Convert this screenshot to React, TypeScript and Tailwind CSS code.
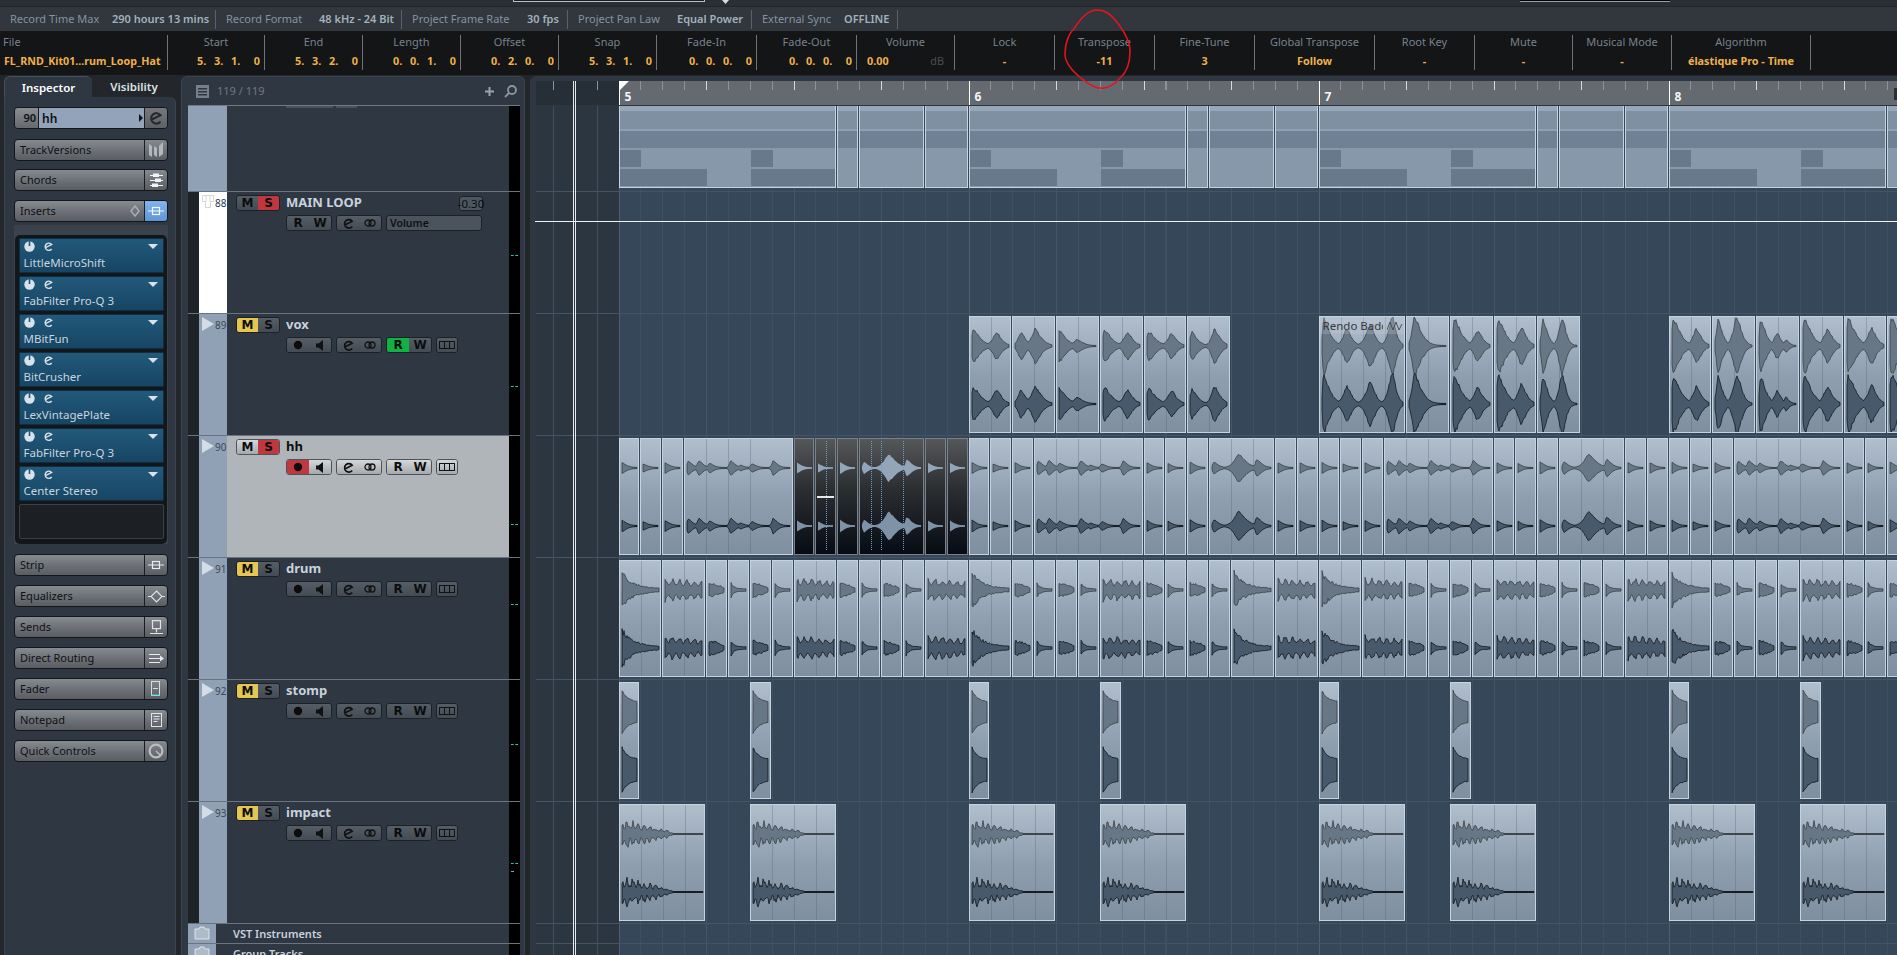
import React from "react";

const U = 21.875;
const ORIGIN = 82.6;

function rng(seed: number) {
  let s = seed * 2654435761 + 12345;
  return () => {
    s = (s + 0x6d2b79f5) | 0;
    let t = Math.imul(s ^ (s >>> 15), 1 | s);
    t = (t + Math.imul(t ^ (t >>> 7), 61 | t)) ^ t;
    return ((t ^ (t >>> 14)) >>> 0) / 4294967296;
  };
}

type Lobe = [number, number, number, number];
type Env = (t: number, x: number, w: number) => number;

const lobes = (l: Lobe[]): Env => (t, x, w) => {
  let a = 0;
  for (const [p, amp, dec, rise] of l) {
    const d = x - p * w;
    const v = d >= 0 ? amp * Math.exp(-Math.pow(d / dec, 1.5)) : amp * Math.exp(-Math.pow(-d / rise, 1.5));
    a = Math.max(a, v);
  }
  return a;
};

const kick: Env = (t) => 18 * Math.exp(-t * 3.6) + 0.8;
const noisy: Env = (t, x) => (9.5 - 3 * t) * (0.8 + 0.3 * Math.sin(x * 0.85));
const medium: Env = (t) => 6.5 * (1 - 0.55 * t) * Math.min(1, (t + 0.08) * 6) * (1 - Math.pow(t, 5) * 0.7);
const decay: Env = (t) => 10 * Math.exp(-t * 5.5) + 0.6;
const stomp: Env = (t) => 9.5 + 16.5 * Math.exp(-t * 3.3);
const impact: Env = (t, x) => (t < 0.62 ? (11 * Math.pow(1 - t / 0.62, 0.7) + 0.5) * (0.75 + 0.3 * Math.sin(x * 1.1)) : 0);

function shape(w: number, env: Env, seed: number, cy: number, jag: number, scale: number) {
  const r = rng(seed);
  const up: string[] = [];
  const dn: string[] = [];
  for (let x = 2; x <= w - 1; x++) {
    const a = env(x / w, x, w) * scale;
    up.push(`${x},${(cy - a * (1 + jag * (r() - 0.5)) - 0.5).toFixed(1)}`);
    dn.unshift(`${x},${(cy + a * (1 + jag * (r() - 0.5)) + 0.5).toFixed(1)}`);
  }
  return up.concat(dn).join(" ");
}

function Wave({ w, h, env, seed, jag = 0.18, dark = false }: { w: number; h: number; env: Env; seed: number; jag?: number; dark?: boolean }) {
  const tops = dark
    ? [{ f: "#93a6b9", s: "none", l: "#7f90a2" }, { f: "#7f93a8", s: "none", l: "#7f90a2" }]
    : [{ f: "#677786", s: "#34383c", l: "#3a3c3f" }, { f: "#47596b", s: "#0a0d10", l: "#0c0e10" }];
  return (
    <svg width={w} height={h} className="block">
      {[29, 87].map((cy, i) => (
        <g key={i}>
          <line x1={2} x2={w - 1} y1={cy} y2={cy} stroke={tops[i].l} strokeWidth={1.6} />
          <polygon points={shape(w, env, seed + i * 97, cy, jag, i === 0 ? 1 : 1.05)} fill={tops[i].f} stroke={tops[i].s} strokeWidth={0.7} />
        </g>
      ))}
    </svg>
  );
}

const EVENT_BG = "bg-[repeating-linear-gradient(90deg,transparent_0,transparent_20.9px,rgba(72,92,112,.3)_20.9px,rgba(72,92,112,.3)_21.875px),linear-gradient(#b1becc,#8f9fb0_50%,#7f8fa0)]";

function Ev({ start, len, env, seed, jag, dark, children }: { start: number; len: number; env?: Env; seed: number; jag?: number; dark?: boolean; children?: React.ReactNode }) {
  const w = len * U - 1;
  return (
    <div
      className={`absolute top-[2px] h-[117px] border overflow-hidden ${dark ? "border-[#7c7f83] bg-[linear-gradient(#55575a,#2a2d30_45%,#070c14)]" : `border-[#c3d3e2] ${EVENT_BG}`}`}
      style={{ left: ORIGIN + start * U, width: w }}
    >
      {env && <Wave w={Math.floor(w - 2)} h={115} env={env} seed={seed} jag={jag} dark={dark} />}
      {children}
    </div>
  );
}

function MidiPart({ start, end }: { start: number; end: number }) {
  const w = (end - start) * U - 1;
  const hits = [0, 6, 16, 22, 32, 38, 48, 54];
  return (
    <div className="absolute top-0 h-[82px] border-b border-x border-[#c3d3e2] bg-[#8698aa] overflow-hidden" style={{ left: ORIGIN + start * U, width: w }}>
      <div className="h-[5px] bg-[#97a8b8]" />
      <div className="h-[18px] bg-[#7e90a2]" />
      <div className="h-[2px] bg-[#8fa0b1]" />
      <div className="h-[17px] bg-[#6f8194]" />
      {hits.map((u) => (
        <React.Fragment key={u}>
          <div className="absolute top-[44px] h-[17px] bg-[#67798b]" style={{ left: (u - start) * U, width: U }} />
          <div className="absolute top-[63px] h-[17px] bg-[#67798b]" style={{ left: (u - start) * U, width: 4 * U }} />
        </React.Fragment>
      ))}
    </div>
  );
}

const hhRaw: [number, number, Lobe[]][] = [
  [0, 1, [[0.04, 9, 3.5, 1]]],
  [1, 1, [[0.06, 6, 3.5, 1]]],
  [2, 1, [[0.06, 8, 3.5, 1]]],
  [3, 5, [[0.03, 10, 3, 1.2], [0.13, 11, 3, 1.5], [0.23, 7, 3, 1.2], [0.43, 11, 3, 1.2], [0.52, 4, 2.5, 1], [0.63, 6, 3, 1.2], [0.83, 11, 3, 1.2]]],
  [8, 1, [[0.06, 8, 3.5, 1]]],
  [9, 1, [[0.06, 7, 3, 1]]],
  [10, 1, [[0.08, 9, 3.5, 1]]],
  [11, 3, [[0.06, 9, 3, 1], [0.46, 21, 5, 4.5], [0.75, 13, 3.5, 1.2]]],
  [14, 1, [[0.06, 8, 3.5, 1]]],
  [15, 1, [[0.06, 8, 3.5, 1]]],
];
const hhPattern: [number, number, Lobe[]][] = hhRaw.map(([s, l, lb]) => [s, l, lb.map(([p, a, d, r]) => [p, a * 0.62, d * 1.8, r * 1.3] as Lobe)]);

const V = (a: number, b: number): Lobe[] => [[0.08, a, 9, 2], [0.66, b, 6.5, 5]];
const voxEvents: [number, number, Lobe[]][] = [
  [16, 2, V(15, 13)], [18, 2, [[0.2, 13, 6, 4], [0.55, 16, 8, 5]]], [20, 2, [[0.04, 15, 9, 2], [0.5, 6, 7, 4]]], [22, 2, V(15, 13)], [24, 2, V(14, 12)], [26, 2, [[0.1, 13, 7, 3], [0.66, 16, 7, 4]]],
  [32, 4, [[0.04, 27, 8, 1], [0.32, 16, 6, 5], [0.6, 20, 6, 6], [0.86, 28, 5, 5]]], [36, 2, [[0.18, 28, 9, 3]]], [38, 2, V(26, 15)], [40, 2, V(26, 18)], [42, 2, [[0.12, 25, 6, 2], [0.6, 28, 5, 4]]],
  [48, 2, V(26, 16)], [50, 2, [[0.12, 25, 6, 2], [0.6, 28, 6, 5]]], [52, 2, [[0.08, 26, 7, 1], [0.5, 12, 5, 4], [0.72, 6, 4, 2]]], [54, 2, V(26, 16)], [56, 2, V(26, 17)], [58, 2, V(28, 20)],
];

const drumKinds: [number, Env][] = [
  [0, kick], [2, noisy], [4, medium], [5, decay], [6, medium], [7, decay], [8, noisy], [10, medium], [11, decay], [12, medium], [13, decay], [14, noisy],
  [16, kick], [18, medium], [19, decay], [20, medium], [21, decay], [22, noisy], [24, medium], [25, decay], [26, medium], [27, decay], [28, kick], [30, noisy],
  [32, kick], [34, noisy], [36, medium], [37, decay], [38, medium], [39, decay], [40, noisy], [42, medium], [43, decay], [44, medium], [45, decay], [46, noisy],
  [48, kick], [50, medium], [51, decay], [52, medium], [53, decay], [54, noisy], [56, medium], [57, decay], [58, medium], [59, decay], [60, noisy],
];

const midiParts: [number, number][] = [];
[0, 16, 32, 48].forEach((b) => {
  midiParts.push([b, b + 10], [b + 10, b + 11], [b + 11, b + 14], [b + 14, b + 16]);
});

function ArrRow({ h, children }: { h: string; children?: React.ReactNode }) {
  return <div className={`relative ${h} border-t border-[#435465] overflow-hidden`}>{children}</div>;
}

/* ---------- icons ---------- */
const EIcon = ({ c = "#111", s = 13 }: { c?: string; s?: number }) => (
  <svg width={s} height={s} viewBox="0 0 14 14" fill="none" stroke={c} strokeWidth={1.8}>
    <path d="M3 8.5 L11 4.5 A4.6 4.6 0 1 0 11 10.2" />
  </svg>
);
const Link = ({ c = "#111" }: { c?: string }) => (
  <svg width={12} height={10} viewBox="0 0 12 10" fill="none" stroke={c} strokeWidth={1.3}>
    <circle cx={4} cy={5} r={3} />
    <circle cx={8} cy={5} r={3} />
  </svg>
);
const Speaker = () => (
  <svg width={8} height={11} viewBox="0 0 8 11" fill="#111">
    <path d="M0 3.5h2.5L7 0v11L2.5 7.5H0z" />
  </svg>
);
const Rec = () => (
  <svg width={10} height={10} viewBox="0 0 10 10" fill="#0c0c0c">
    <circle cx={5} cy={5} r={4.2} />
  </svg>
);
const Lanes = () => (
  <svg width={16} height={8} viewBox="0 0 16 8" fill="none" stroke="#111" strokeWidth={1}>
    <rect x={0.5} y={0.5} width={15} height={7} />
    <path d="M5.5 0v8M10.5 0v8" />
  </svg>
);
const Glyph = ({ t, c = "text-[#0d0d0d]" }: { t: string; c?: string }) => (
  <span className={`[font-family:'DejaVu_Sans',sans-serif] font-bold text-[12px] leading-none ${c}`}>{t}</span>
);

const StripIcon = ({ c = "#e8ecef" }: { c?: string }) => (
  <svg width={16} height={12} viewBox="0 0 16 12" fill="none" stroke={c} strokeWidth={1.2}>
    <path d="M0 6h16" />
    <rect x={4.5} y={2.5} width={7} height={7} />
  </svg>
);
const icons: Record<string, React.ReactNode> = {
  versions: (
    <svg width={15} height={17} viewBox="0 0 15 17" fill="#b3b8bc">
      <path d="M0 2l3 2v11l-3-2zM5 4l3 2v9l-3-2zM10 15l4-3V0l-4 4z" />
    </svg>
  ),
  chords: (
    <svg width={13} height={15} viewBox="0 0 13 15" fill="#f0f2f4">
      <rect y={2} width={13} height={1} /><rect x={3} y={0.5} width={6} height={3.5} />
      <rect y={7} width={13} height={1} /><rect x={5} y={5.5} width={6} height={3.5} />
      <rect y={12} width={13} height={1} /><rect x={2} y={10.5} width={6} height={3.5} />
    </svg>
  ),
  strip: <StripIcon />,
  eq: (
    <svg width={17} height={13} viewBox="0 0 17 13" fill="none" stroke="#dfe3e6" strokeWidth={1.1}>
      <path d="M0 6.5h3M14 6.5h3M8.5 1l5.5 5.5L8.5 12 3 6.5z" />
    </svg>
  ),
  sends: (
    <svg width={13} height={15} viewBox="0 0 13 15" fill="none" stroke="#dfe3e6" strokeWidth={1.2}>
      <rect x={2.5} y={0.6} width={8} height={8} />
      <path d="M6.5 8.6v4M0 13.5h13" />
    </svg>
  ),
  routing: (
    <svg width={15} height={11} viewBox="0 0 15 11" fill="#e8ecef">
      <rect y={1} width={11} height={1} /><rect y={5} width={11} height={1} /><rect y={9} width={11} height={1} />
      <path d="M11 2.5L15 5.5 11 8.5z" />
    </svg>
  ),
  fader: (
    <svg width={10} height={16} viewBox="0 0 10 16" fill="none" stroke="#d8dde0" strokeWidth={1}>
      <rect x={0.5} y={0.5} width={8} height={14} />
      <path d="M2 7.5h5" />
      <path d="M0 14h9" stroke="#3fd6d6" />
    </svg>
  ),
  notepad: (
    <svg width={11} height={14} viewBox="0 0 11 14" fill="none" stroke="#e0e4e7" strokeWidth={1}>
      <rect x={0.5} y={0.5} width={10} height={13} />
      <path d="M2.5 3.5h6M2.5 6h6M2.5 8.5h4" />
    </svg>
  ),
  quick: (
    <svg width={16} height={16} viewBox="0 0 16 16" fill="none" stroke="#b9bdc0" strokeWidth={2.2}>
      <circle cx={8} cy={8} r={6.4} />
      <path d="M8 8l4 4" strokeWidth={1.6} />
    </svg>
  ),
};

const InsBtn = ({ label, icon, mt = "mt-[9px]" }: { label: string; icon: React.ReactNode; mt?: string }) => (
  <div className={`${mt} w-[154px] h-[22px] flex rounded-[4px] border border-[#14171a] bg-[linear-gradient(#868b90,#6c7076_55%,#5a5e63)] overflow-hidden`}>
    <div className="flex-1 pl-[5px] text-[11px] leading-[20px] text-[#0f1113] truncate">{label}</div>
    <div className="w-[23px] border-l border-[#1a1d20] flex items-center justify-center">{icon}</div>
  </div>
);

const slots = ["LittleMicroShift", "FabFilter Pro-Q 3", "MBitFun", "BitCrusher", "LexVintagePlate", "FabFilter Pro-Q 3", "Center Stereo"];

function Inspector() {
  return (
    <div className="w-[172px] ml-[4px] flex flex-col">
      <div className="h-[21px] flex text-[11.5px] font-semibold">
        <div className="w-[88px] bg-[#2f3742] rounded-t-[6px] text-center leading-[22px] text-white border-t border-l border-[#46505c]">Inspector</div>
        <div className="flex-1 text-center leading-[22px] text-[#dfe4e8]">Visibility</div>
      </div>
      <div className="flex-1 bg-[#2f3742] rounded-tr-[6px] border-l border-r border-[#3b4550] pl-[9px] flex flex-col">
        <div className="mt-[10px] w-[154px] h-[22px] flex rounded-[4px] border border-[#14171a] overflow-hidden text-[12px]">
          <div className="w-[23px] bg-[linear-gradient(#8a8e93,#66696e)] text-right pr-[2px] leading-[19px] text-[11px] font-semibold text-[#111]">90</div>
          <div className="flex-1 bg-[#93a4ba] border-l border-[#1a1d20] pl-[3px] font-semibold leading-[19px] text-[#0e1114] flex items-center justify-between pr-[1px]">
            hh
            <svg width={4} height={8} viewBox="0 0 4 8" fill="#101214"><path d="M0 0l4 4-4 4z" /></svg>
          </div>
          <div className="w-[23px] bg-[linear-gradient(#75797e,#5d6166)] border-l border-[#1a1d20] flex items-center justify-center"><EIcon c="#26292c" s={16} /></div>
        </div>
        <InsBtn mt="mt-[10px]" label="TrackVersions" icon={icons.versions} />
        <InsBtn mt="mt-[8px]" label="Chords" icon={icons.chords} />
        <div className="mt-[9px] w-[154px] h-[22px] flex rounded-[4px] border border-[#14171a] bg-[linear-gradient(#868b90,#6c7076_55%,#5a5e63)] overflow-hidden">
          <div className="flex-1 pl-[5px] text-[11px] leading-[20px] text-[#0f1113] flex items-center justify-between pr-[4px]">
            Inserts
            <svg width={10} height={12} viewBox="0 0 10 12" fill="none" stroke="#a9adb0" strokeWidth={1.5}><path d="M5 1l4 5-4 5-4-5z" /></svg>
          </div>
          <div className="w-[23px] border-l border-[#1a1d20] bg-[linear-gradient(#82b4ec,#5f95d8)] flex items-center justify-center"><StripIcon c="#f4f8fc" /></div>
        </div>
        <div className="mt-[3px] w-[154px] bg-[#3a424b] pt-[10px] px-[1px]">
          <div className="bg-[#14171a] rounded-[5px] px-[3.5px] pt-[3px] pb-[5px] flex flex-col gap-[3px]">
            {slots.map((s, i) => (
              <div key={i} className="h-[35px] border border-[#0f2e44] bg-[linear-gradient(#22597a,#174564)] rounded-[1px] pl-[4px] pr-[4px] flex flex-col">
                <div className="h-[16px] flex items-center -mt-[1px]">
                  <svg width={11} height={11} viewBox="0 0 11 11" fill="#d8e2ea">
                    <circle cx={5.5} cy={5.5} r={5.2} />
                    <rect x={4.7} y={0} width={1.6} height={5} fill="#22597a" />
                  </svg>
                  <span className="ml-[8px] flex"><EIcon c="#d8e2ea" s={11} /></span>
                  <svg className="ml-auto mr-[1px]" width={10} height={5} viewBox="0 0 10 5" fill="#d8e2ea"><path d="M0 0h10L5 5z" /></svg>
                </div>
                <div className="text-[11.5px] leading-[14px] text-[#c8d5df] mt-[2px]">{s}</div>
              </div>
            ))}
            <div className="h-[35px] bg-[#1c2024] border border-[#3b4046] rounded-[2px]" />
          </div>
        </div>
        <InsBtn mt="mt-[10px]" label="Strip" icon={icons.strip} />
        <InsBtn label="Equalizers" icon={icons.eq} />
        <InsBtn label="Sends" icon={icons.sends} />
        <InsBtn label="Direct Routing" icon={icons.routing} />
        <InsBtn label="Fader" icon={icons.fader} />
        <InsBtn label="Notepad" icon={icons.notepad} />
        <InsBtn label="Quick Controls" icon={icons.quick} />
      </div>
    </div>
  );
}

/* ---------- track list ---------- */
type BtnProps = { w: string; light?: boolean; a: React.ReactNode; b?: React.ReactNode; aOn?: string; bOn?: string };
const Ctl = ({ w, light, a, b, aOn, bOn }: BtnProps) => {
  const base = light ? "bg-[linear-gradient(#d5d8da,#a5a9ad)]" : "bg-[linear-gradient(#555d66,#434b54)]";
  return (
    <div className={`${w} h-[16px] flex rounded-[3px] border ${light ? "border-[#4e5357]" : "border-[#1d2125]"} overflow-hidden`}>
      <div className={`flex-1 flex items-center justify-center ${aOn ?? base}`}>{a}</div>
      {b && <div className={`flex-1 flex items-center justify-center ${bOn ?? base}`}>{b}</div>}
    </div>
  );
};

const Meter = ({ y, y2 }: { y: number; y2?: number }) => (
  <div className="w-[11px] bg-black flex flex-col">
    <div className="w-[7px] ml-[2px] border-t border-dashed border-[#1fd0c0]" style={{ marginTop: y }} />
    {y2 !== undefined && <div className="w-[3px] ml-[2px] border-t border-[#1fd0c0]" style={{ marginTop: y2 }} />}
  </div>
);

const meterY: Record<number, number> = { 88: 63, 89: 72, 90: 88, 91: 46, 92: 64, 93: 61 };

function Track({ n, name, mOn, sOn, sel, master }: { n: number; name: string; mOn?: boolean; sOn?: boolean; sel?: boolean; master?: boolean }) {
  return (
    <div className="h-[122px] flex border-t border-[#6a7380] box-border">
      <div className="w-[11px] bg-[#1e2328]" />
      <div className={`w-[28px] pt-[3px] flex items-start ${master ? "bg-white" : "bg-[#90a1b5]"}`}>
        {master ? (
          <svg className="ml-[3px] shrink-0" width={12} height={15} viewBox="0 0 12 15" fill="none" stroke="#d3d7db" strokeWidth={1}>
            <path d="M0.5 0.5h11v6h-3v6h-5v-6h-3zM4 0.5v6M8 0.5v6" />
          </svg>
        ) : (
          <svg className="ml-[3px] shrink-0" width={12} height={14} viewBox="0 0 12 14" fill="#d3dde7"><path d="M0 0l12 7L0 14z" /></svg>
        )}
        <span className={`text-[10px] leading-[12px] ml-[1px] mt-[2px] ${master ? "text-[#22355a]" : "text-[#3c4855]"}`}>{n}</span>
      </div>
      <div className={`flex-1 pl-[9px] pr-[26px] pt-[3px] ${sel ? "bg-[#b0b5b9]" : "bg-[#2f3742]"}`}>
        <div className="flex items-center h-[16px]">
          <Ctl w="w-[44px]" light={sel} a={<Glyph t="M" />} b={<Glyph t="S" />} aOn={mOn ? "bg-[#e5c650]" : undefined} bOn={sOn ? "bg-[#c0383f]" : undefined} />
          <span className={`ml-[6px] text-[13px] font-bold ${sel ? "text-[#0c0e10]" : "text-[#c8d2dc]"}`}>{name}</span>
          {master && (
            <span className="ml-auto w-[24px] h-[15px] rounded-[3px] bg-[#4b5660] border border-[#1d2125] flex items-center justify-center">
              <span className="text-[11.5px] leading-[13px] text-[#0a0c0e] whitespace-nowrap">-0.30</span>
            </span>
          )}
        </div>
        <div className="mt-[4px] ml-[50px] flex gap-[4px]">
          {master ? (
            <>
              <Ctl w="w-[46px]" a={<Glyph t="R" />} b={<Glyph t="W" />} />
              <Ctl w="w-[46px]" a={<EIcon />} b={<Link />} />
              <div className="w-[96px] h-[16px] rounded-[3px] border border-[#1d2125] bg-[#4b535c] pl-[3px] text-[10.5px] leading-[14px] text-[#0e1012] font-semibold">Volume</div>
            </>
          ) : (
            <>
              <Ctl w="w-[46px]" light={sel} a={<Rec />} b={<Speaker />} aOn={sel ? "bg-[#c0383f]" : undefined} />
              <Ctl w="w-[46px]" light={sel} a={<EIcon />} b={<Link />} />
              <Ctl w="w-[46px]" light={sel} a={<Glyph t="R" />} b={<Glyph t="W" />} aOn={name === "vox" ? "bg-[#12b144]" : undefined} />
              <Ctl w="w-[22px]" light={sel} a={<Lanes />} />
            </>
          )}
        </div>
      </div>
      <Meter y={meterY[n]} y2={n === 93 ? 7 : undefined} />
    </div>
  );
}

const Folder = () => (
  <svg width={16} height={14} viewBox="0 0 16 14" stroke="#eef2f5" strokeWidth={0.8}>
    <path d="M1 3h4l1-2h4l1 2h4v10H1z" fill="#aebcca" />
  </svg>
);

function TrackList() {
  return (
    <div className="w-[344px] ml-[5px] flex flex-col bg-[#2f3742] rounded-t-[6px] border-t border-x border-[#3b4550]">
      <div className="h-[29px] flex items-center border-b border-[#717983] ml-[6px] mr-[4px]">
        <svg className="ml-[8px]" width={13} height={13} viewBox="0 0 13 13" fill="#77808a">
          <path d="M0 0h13v13H0zM2 3v1.5h9V3zM2 6v1.5h9V6zM2 9v1.5h9V9z" fillRule="evenodd" />
        </svg>
        <span className="ml-[8px] text-[11px] text-[#6f7883]">119 / 119</span>
        <svg className="ml-auto mr-[10px]" width={9} height={9} viewBox="0 0 9 9" fill="#9aa3ad"><path d="M3.5 0h2v3.5H9v2H5.5V9h-2V5.5H0v-2h3.5z" /></svg>
        <svg className="mr-[3px]" width={13} height={13} viewBox="0 0 13 13" fill="none" stroke="#8d96a0" strokeWidth={1.8}><circle cx={8} cy={5} r={4} /><path d="M5 8L1 12" /></svg>
      </div>
      <div className="ml-[6px] mr-[4px] flex flex-col">
        <div className="h-[85px] flex">
          <div className="w-[39px] bg-[#90a1b5]" />
          <div className="flex-1 flex items-start pl-[59px] gap-[3px]">
            <div className="w-[47px] h-[2px] bg-[#4a525b]" />
            <div className="w-[21px] h-[2px] bg-[#4a525b]" />
          </div>
          <div className="w-[11px] bg-black" />
        </div>
        <Track n={88} name="MAIN LOOP" sOn master />
        <Track n={89} name="vox" mOn />
        <Track n={90} name="hh" sOn sel />
        <Track n={91} name="drum" mOn />
        <Track n={92} name="stomp" mOn />
        <Track n={93} name="impact" mOn />
        {["VST Instruments", "Group Tracks"].map((t, i) => (
          <div key={t} className={`${i === 0 ? "h-[20px]" : "h-[12px] overflow-hidden"} flex border-t border-[#6a7380]`}>
            <div className="w-[28px] bg-[#90a1b5] flex justify-center items-start pt-[2px]"><Folder /></div>
            <div className="flex-1 pl-[17px] text-[11px] font-semibold leading-[19px] text-[#c8d2dc]">{t}</div>
            <div className="w-[11px] bg-black" />
          </div>
        ))}
      </div>
    </div>
  );
}

/* ---------- arrange ---------- */
const Hit = ({ x }: { x: number }) => <div className="absolute top-[2px] bottom-[4px] border-l border-dotted border-[#6f9cc4]" style={{ left: x }} />;

function Arrange() {
  return (
    <div className="flex-1 ml-[5px] min-w-0 relative rounded-tl-[6px] bg-[#2f3742] pl-[6px] pt-[5px] overflow-hidden">
      <div className="relative h-[25px] bg-[linear-gradient(90deg,#262f38_82.6px,#656a71_82.6px)] bg-no-repeat border-b border-[#2d3640]">
        <div className="h-[9px] bg-[repeating-linear-gradient(90deg,#d7dadd_82.6px,#d7dadd_83.6px,transparent_83.6px,transparent_170.1px),repeating-linear-gradient(90deg,#8d9299_17px,#8d9299_18px,transparent_18px,transparent_38.875px)]" />
        {[5, 6, 7, 8].map((b, i) => (
          <div key={b} className="absolute top-0 h-[24px] border-l border-white pl-[5px] pt-[9px] text-[12px] font-bold leading-[14px] text-[#f3f5f7]" style={{ left: ORIGIN + i * 350 }}>
            {b}
          </div>
        ))}
        <svg className="absolute top-0" style={{ left: ORIGIN }} width={10} height={10} viewBox="0 0 10 10" fill="#fff"><path d="M0 0h10L0 10z" /></svg>
        <div className="absolute right-0 top-[7px] w-[3px] h-[12px] bg-[#2b2f33]" />
      </div>
      <div className="bg-[repeating-linear-gradient(90deg,#4e5f70_82.6px,#4e5f70_83.6px,transparent_83.6px,transparent_432.6px),repeating-linear-gradient(90deg,#445567_82.6px,#445567_83.6px,transparent_83.6px,transparent_170.1px),repeating-linear-gradient(90deg,#3e4f61_17px,#3e4f61_18px,transparent_18px,transparent_38.875px),linear-gradient(90deg,#2c3640_82.6px,#364759_82.6px)]">
        <div className="relative h-[85px] overflow-hidden">
          {midiParts.map(([s, e]) => <MidiPart key={s} start={s} end={e} />)}
        </div>
        <ArrRow h="h-[122px]" />
        <ArrRow h="h-[122px]">
          {voxEvents.map(([s, l, lb]) => (
            <Ev key={s} start={s} len={l} env={lobes(lb)} seed={s + 3} jag={0.2}>
              {s === 32 && (
                <div className="absolute left-0 top-0 right-0 h-[17px] flex items-center bg-[#c6d0db]/25">
                  <span className="ml-[3px] w-[60px] text-[11.5px] text-[#33393f] overflow-hidden whitespace-nowrap">Rendo Badd</span>
                  <svg className="ml-[4px]" width={16} height={10} viewBox="0 0 16 10" fill="none" stroke="#4a5058" strokeWidth={1}>
                    <path d="M0 9L3 1l3 8 3-8 3 8 3-6" />
                  </svg>
                </div>
              )}
            </Ev>
          ))}
        </ArrRow>
        <ArrRow h="h-[122px]">
          {[0, 16, 32, 48].flatMap((b) =>
            hhPattern.map(([s, l, lb]) => (
              <Ev key={b + s} start={b + s} len={l} env={lobes(lb)} seed={b + s + 11} jag={0.1} dark={b === 0 && s >= 8}>
                {b === 0 && s === 9 && (
                  <>
                    <Hit x={10} />
                    <div className="absolute left-[1px] right-[1px] top-[57px] h-[2px] bg-[#e6e8ea]" />
                  </>
                )}
                {b === 0 && s === 11 && (
                  <>
                    <Hit x={11} />
                    <Hit x={21} />
                    <Hit x={43} />
                  </>
                )}
              </Ev>
            ))
          )}
        </ArrRow>
        <ArrRow h="h-[122px]">
          {drumKinds.slice(0, -1).map(([s, env], i) => (
            <Ev key={s} start={s} len={drumKinds[i + 1][0] - s} env={env} seed={s + 29} jag={env === noisy ? 0.4 : 0.45} />
          ))}
        </ArrRow>
        <ArrRow h="h-[122px]">
          {[0, 6, 16, 22, 32, 38, 48, 54].map((s) => <Ev key={s} start={s} len={1} env={stomp} seed={s + 5} jag={0.08} />)}
        </ArrRow>
        <ArrRow h="h-[122px]">
          {[0, 6, 16, 22, 32, 38, 48, 54].map((s) => <Ev key={s} start={s} len={4} env={impact} seed={7} jag={0.7} />)}
        </ArrRow>
        <ArrRow h="h-[20px]" />
        <ArrRow h="h-[14px]" />
      </div>
      {/* playhead and automation line lie over the tracks */}
      <div className="absolute top-[5px] bottom-0 left-[43px] w-[3px] border-x border-[#e6e9ec]" />
      <div className="absolute left-[5px] right-0 top-[145px] h-px bg-[#eef0f2]" />
    </div>
  );
}

/* ---------- header ---------- */
const status: [string, string, number, number][] = [
  ["Record Time Max", "290 hours 13 mins", 216, 102],
  ["Record Format", "48 kHz - 24 Bit", 186, 93],
  ["Project Frame Rate", "30 fps", 166, 115],
  ["Project Pan Law", "Equal Power", 184, 99],
  ["External Sync", "OFFLINE", 146, 82],
];

const Pos = ({ v }: { v: string }) => {
  const p = v.split(" ");
  return (
    <span className="flex justify-end pr-[4px] w-full">
      {p.map((x, i) => (
        <span key={i} className={i === 3 ? "w-[12px] text-right" : "w-[17px]"}>{x}</span>
      ))}
    </span>
  );
};

const info: [string, React.ReactNode, number][] = [
  ["File", "", 168],
  ["Start", <Pos v="5. 3. 1. 0" />, 97],
  ["End", <Pos v="5. 3. 2. 0" />, 98],
  ["Length", <Pos v="0. 0. 1. 0" />, 98],
  ["Offset", <Pos v="0. 2. 0. 0" />, 98],
  ["Snap", <Pos v="5. 3. 1. 0" />, 98],
  ["Fade-In", <Pos v="0. 0. 0. 0" />, 100],
  ["Fade-Out", <Pos v="0. 0. 0. 0" />, 100],
  ["Volume", <span className="flex w-full justify-between px-[10px]">0.00<span className="text-[#4a4e52] font-normal">dB</span></span>, 98],
  ["Lock", "-", 100],
  ["Transpose", "-11", 100],
  ["Fine-Tune", "3", 100],
  ["Global Transpose", "Follow", 120],
  ["Root Key", "-", 100],
  ["Mute", "-", 98],
  ["Musical Mode", "-", 99],
  ["Algorithm", "élastique Pro - Time", 139],
];

export default function App() {
  return (
    <div className="relative w-[1897px] h-[955px] overflow-hidden bg-[#23272c] [font-family:'Noto_Sans',sans-serif] flex flex-col">
      <div className="h-[7px] bg-[#2a2f35] border-b border-[#22262a] flex shrink-0">
        <div className="ml-[513px] w-[192px] h-[2px] border-b border-x border-[#b9bec3] bg-[#1a1c1f]" />
        <svg className="ml-[17px]" width={7} height={4} viewBox="0 0 7 4" fill="#d9dde0"><path d="M0 0h7L3.5 4z" /></svg>
        <div className="ml-[791px] w-[150px] h-[2px] bg-black border-b border-[#9a9ea2]" />
      </div>
      <div className="h-[24px] bg-[#31373c] flex items-center shrink-0 text-[11px]">
        {status.map(([l, v, w, lw]) => (
          <div key={l} className="flex items-center h-[19px] border-r border-[#59616a] pl-[10px] box-border" style={{ width: w }}>
            <span className="text-[#8593a1] whitespace-nowrap" style={{ width: lw }}>{l}</span>
            <span className="text-[#a3b1bf] font-semibold whitespace-nowrap">{v}</span>
          </div>
        ))}
      </div>
      <div className="h-[44px] bg-[#131516] flex items-start pt-[4px] shrink-0">
        {info.map(([l, v, w]) => (
          <div key={l} className="h-[35px] flex flex-col border-r border-[#6e7378] box-border" style={{ width: w }}>
            {l === "File" ? (
              <>
                <div className="pl-[3px] text-[11px] leading-[14px] text-[#77828d]">File</div>
                <div className="pl-[4px] mt-[4px] text-[10.7px] leading-[16px] font-bold text-[#efb049] whitespace-nowrap">FL_RND_Kit01...rum_Loop_Hat</div>
              </>
            ) : (
              <>
                <div className="text-center text-[11px] leading-[14px] text-[#77828d] whitespace-nowrap">{l}</div>
                <div className="mt-[4px] text-[10.8px] leading-[16px] font-bold text-[#efb049] flex justify-center whitespace-nowrap">{v}</div>
              </>
            )}
          </div>
        ))}
      </div>
      <div className="flex-1 flex pt-[1px] min-h-0">
        <Inspector />
        <TrackList />
        <Arrange />
      </div>
      <svg className="absolute left-[1060px] top-[5px]" width={76} height={90} viewBox="0 0 76 90" fill="none" stroke="#e4141c" strokeWidth={1.6}>
        <path d="M37 5C46 5 51 10 56 16C64 26 70 36 70 46C70 58 66 68 60 73C54 80 48 84 40 83C33 83 28 78 22 74C12 66 5 58 5 49C5 38 9 28 14 24C20 14 28 5 37 5Z" />
      </svg>
    </div>
  );
}
